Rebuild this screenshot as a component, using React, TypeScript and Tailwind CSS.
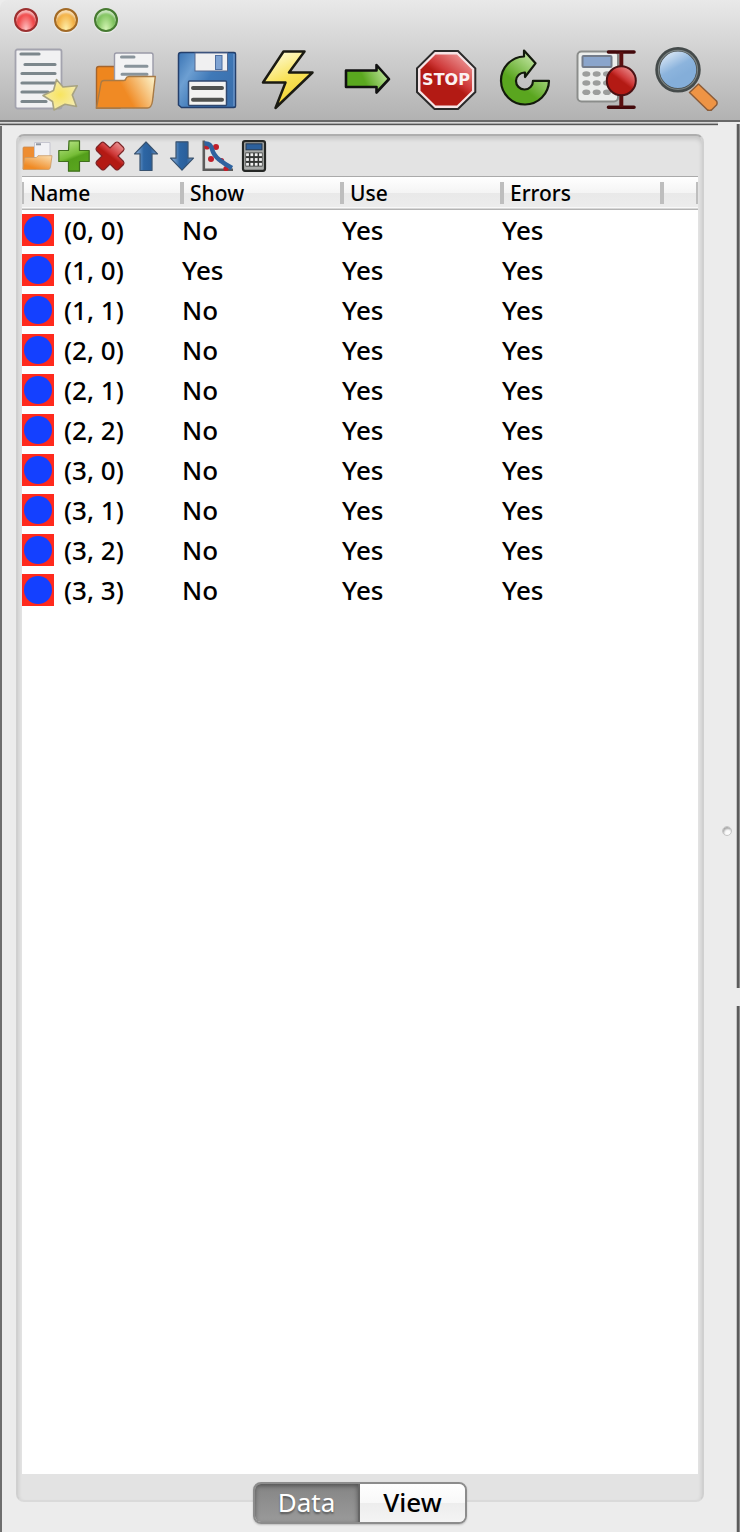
import { useState, type ReactNode } from "react";

type DataSet = { name: string; show: string; use: string; errors: string };

const dataSets: DataSet[] = [
  { name: "(0, 0)", show: "No", use: "Yes", errors: "Yes" },
  { name: "(1, 0)", show: "Yes", use: "Yes", errors: "Yes" },
  { name: "(1, 1)", show: "No", use: "Yes", errors: "Yes" },
  { name: "(2, 0)", show: "No", use: "Yes", errors: "Yes" },
  { name: "(2, 1)", show: "No", use: "Yes", errors: "Yes" },
  { name: "(2, 2)", show: "No", use: "Yes", errors: "Yes" },
  { name: "(3, 0)", show: "No", use: "Yes", errors: "Yes" },
  { name: "(3, 1)", show: "No", use: "Yes", errors: "Yes" },
  { name: "(3, 2)", show: "No", use: "Yes", errors: "Yes" },
  { name: "(3, 3)", show: "No", use: "Yes", errors: "Yes" },
];

function Gradients() {
  return (
    <svg className="absolute size-0" aria-hidden="true">
      <defs>
        <linearGradient id="orange" x1="0" y1="0.5" x2="1" y2="0.2">
          <stop offset="0.45" stopColor="#f08a24" />
          <stop offset="1" stopColor="#fbeec2" />
        </linearGradient>
        <linearGradient id="orangeSmall" x1="0.1" y1="1" x2="0.8" y2="0">
          <stop offset="0.2" stopColor="#f08a24" />
          <stop offset="1" stopColor="#f9d7a4" />
        </linearGradient>
        <linearGradient id="blue" x1="0" y1="0" x2="1" y2="0.6">
          <stop offset="0" stopColor="#3a74b4" />
          <stop offset="0.3" stopColor="#6d9fd2" />
          <stop offset="0.6" stopColor="#3f79b8" />
          <stop offset="1" stopColor="#3b70ad" />
        </linearGradient>
        <linearGradient id="yellow" x1="0.2" y1="0" x2="0.6" y2="1">
          <stop offset="0.1" stopColor="#fdf7c4" />
          <stop offset="0.5" stopColor="#f9e35a" />
          <stop offset="1" stopColor="#f0cf2c" />
        </linearGradient>
        <radialGradient id="star">
          <stop offset="0" stopColor="#f8e45e" />
          <stop offset="1" stopColor="#f5ebaa" />
        </radialGradient>
        <linearGradient id="greenRight" x1="0" y1="0.6" x2="1" y2="0.3">
          <stop offset="0.4" stopColor="#5aa81f" />
          <stop offset="1" stopColor="#c4e8a4" />
        </linearGradient>
        <linearGradient id="greenTurn" x1="0.3" y1="0.8" x2="0.8" y2="0.1">
          <stop offset="0.2" stopColor="#5aa61f" />
          <stop offset="1" stopColor="#cdecb0" />
        </linearGradient>
        <linearGradient id="greenPlus" x1="0.2" y1="0" x2="0.6" y2="1">
          <stop offset="0" stopColor="#b5e283" />
          <stop offset="0.5" stopColor="#76bd37" />
          <stop offset="0.6" stopColor="#549f1b" />
          <stop offset="1" stopColor="#5aa61f" />
        </linearGradient>
        <linearGradient id="red" x1="0.9" y1="0" x2="0.3" y2="0.8">
          <stop offset="0" stopColor="#f0a0a0" />
          <stop offset="0.5" stopColor="#cf3a3a" />
          <stop offset="0.65" stopColor="#b31a14" />
          <stop offset="1" stopColor="#b31a14" />
        </linearGradient>
        <linearGradient id="arrowBlue" x1="0" y1="0" x2="1" y2="0">
          <stop offset="0.1" stopColor="#7ea6d2" />
          <stop offset="0.4" stopColor="#2d66a4" />
          <stop offset="0.7" stopColor="#2a5f9b" />
          <stop offset="1" stopColor="#6f9bcb" />
        </linearGradient>
        <linearGradient id="lens" x1="0.1" y1="0" x2="0.5" y2="0.7">
          <stop offset="0.1" stopColor="#e3edf8" />
          <stop offset="0.7" stopColor="#8cb4dd" />
          <stop offset="1" stopColor="#84aed9" />
        </linearGradient>
      </defs>
    </svg>
  );
}

function NewIcon() {
  return (
    <svg viewBox="0 0 64 64" className="size-16">
      <rect x="1.5" y="2.5" width="46" height="59" rx="2" fill="#f1f1f2" stroke="#a3a3ae" strokeWidth="1.8" />
      <path d="M7 7h18M11 17.5h30M8 26.5h33M8 36h33M8 45h26M8 54.5h24" stroke="#7c878c" strokeWidth="3.2" strokeLinecap="round" />
      <path d="M42.5 32.5 49 40l14.3-1.3-5 9.3 4.2 11.5-11.5-2.2L40 63l-1.5-8.5-9.5-6 10.5-5z" fill="url(#star)" stroke="#a8a380" strokeWidth="1.6" strokeLinejoin="round" />
    </svg>
  );
}

function FolderIcon() {
  return (
    <svg viewBox="0 0 64 64" className="size-16">
      <path d="M2.5 61V22q0-2.5 2.5-2.5H26V61z" fill="#ee861e" stroke="#a5642c" strokeWidth="1.4" />
      <path d="M20.5 50V8q0-2 2-2H57q2 0 2 2v42z" fill="#f3f3f4" stroke="#9a9aa8" strokeWidth="1.4" />
      <path d="M27.5 10h12.5M31.500 19.300h21.500M28 27.300h25" stroke="#89949b" strokeWidth="3" strokeLinecap="round" />
      <path d="M2.500 61 7 36q.5-2.500 3-2.500H30q1.500 0 2-2t3-2H61.300L58.500 54q-1 7-5 7z" fill="url(#orange)" stroke="#a87a45" strokeWidth="1.4" strokeLinejoin="round" />
    </svg>
  );
}

function SmallFolderIcon() {
  return (
    <svg viewBox="0 0 32 32" className="size-8">
      <path d="M1 29V8q0-1 1-1H14V29z" fill="#ee8d31" stroke="#c98a50" strokeWidth="0.8" />
      <path d="M12.500 20V2.500H28V20z" fill="#f2f2f5" stroke="#c6c6d0" strokeWidth="1" />
      <path d="M14 4.300h5" stroke="#9096a0" strokeWidth="2" />
      <path d="M1 29.500 2.500 18.500q0-1 1.500-1h10.500l1.500-1.800H30L28.500 27q-.5 2.500-2 2.500z" fill="url(#orangeSmall)" stroke="#c99a66" strokeWidth="0.8" strokeLinejoin="round" />
    </svg>
  );
}

function SaveIcon() {
  return (
    <svg viewBox="0 0 64 64" className="size-16">
      <path d="M7 5.500H60q1.500 0 1.500 1.500V59q0 1.500-1.500 1.500H7.500L4.500 58V8q0-2.500 2.500-2.500z" fill="url(#blue)" stroke="#243f6b" strokeWidth="1.500" />
      <path d="M60 7v52" stroke="#7ea4d4" strokeWidth="1" />
      <rect x="21" y="6" width="32.500" height="18" fill="#f0f0f1" stroke="#54698f" strokeWidth="1" />
      <rect x="41.500" y="8.500" width="6.500" height="14" fill="#7fa3d3" stroke="#4d6ea0" strokeWidth="1" />
      <rect x="14.500" y="34" width="38" height="24.500" rx="1" fill="#f3f3f2" stroke="#30486f" strokeWidth="1.500" />
      <path d="M19 41h29M19 52.800h29" stroke="#505250" strokeWidth="4" strokeLinecap="round" />
    </svg>
  );
}

function BoltIcon() {
  return (
    <svg viewBox="0 0 64 64" className="size-16">
      <path d="M29.500 4.500H50.500L35 25.500H58.500L21.500 61 31.500 35.500H9z" fill="url(#yellow)" stroke="#1a1a12" strokeWidth="2.500" strokeLinejoin="round" />
    </svg>
  );
}

function NextIcon() {
  return (
    <svg viewBox="0 0 64 64" className="size-16">
      <path d="M12 23.500H42.500V18L55 32 42.500 45.500V40H12z" fill="url(#greenRight)" stroke="#111" strokeWidth="2.600" strokeLinejoin="round" />
    </svg>
  );
}

function StopIcon() {
  return (
    <svg viewBox="0 0 64 64" className="size-16">
      <path d="M20.500 4h23.500L61.300 21.300V45L44 62H20.500L3 45V21.300z" fill="#f6e4e6" stroke="#2a2a2a" strokeWidth="2" />
      <path d="M21.500 7.500h21.500L58 22.500V43.800L43 58.500H21.500L6.500 43.800V22.500z" fill="url(#red)" />
      <text x="32" y="38" textAnchor="middle" fontFamily="DejaVu Sans, sans-serif" fontWeight="700" fontSize="16" fill="#fbf2f2">STOP</text>
    </svg>
  );
}

function RefreshIcon() {
  return (
    <svg viewBox="0 0 64 64" className="size-16">
      <path d="M55 33.800A24 24 0 1 1 30 9.500V3.500L41.500 16.300 31 30V25.500A8.500 8.500 0 1 0 39 33.800z" fill="url(#greenTurn)" stroke="#131a0c" strokeWidth="2.200" strokeLinejoin="round" />
    </svg>
  );
}

function FitIcon() {
  return (
    <svg viewBox="0 0 64 64" className="size-16">
      <rect x="3.500" y="4.500" width="40.500" height="50" rx="4" fill="#eceeec" stroke="#8b8d8b" strokeWidth="2" />
      <rect x="8.500" y="9" width="29" height="11" rx="1" fill="#8aa5cb" stroke="#737c8a" strokeWidth="2" />
      {[27, 36, 45.3].map((y) =>
        [12.3, 22.7, 33].map((x) => <ellipse key={`${x}-${y}`} cx={x} cy={y} rx="4" ry="2.800" fill="#9c9e9c" />),
      )}
      <path d="M34.500 5h25.500M34.500 60.300h25.500" stroke="#43090b" strokeWidth="3.600" strokeLinecap="round" />
      <path d="M47.300 5v55" stroke="#5a0f10" strokeWidth="4" />
      <circle cx="47.300" cy="33.700" r="14.500" fill="url(#red)" stroke="#4c1214" strokeWidth="2" />
    </svg>
  );
}

function SearchIcon() {
  return (
    <svg viewBox="0 0 64 64" className="size-16">
      <path d="M35.500 45.500 53.500 63q2 1.200 4 0l5-5q1.200-2 0-4L44.500 37z" fill="#ee9445" stroke="#8c5c38" strokeWidth="1.500" strokeLinejoin="round" />
      <circle cx="24" cy="22.800" r="20.500" fill="url(#lens)" stroke="#454b4b" strokeWidth="4.500" />
      <circle cx="24" cy="22.800" r="19.500" fill="none" stroke="#7b8383" strokeWidth="1.200" />
    </svg>
  );
}

function AddIcon() {
  return (
    <svg viewBox="0 0 32 32" className="size-8">
      <path d="M11 .8h10.500V10.500H31.200V21.500H21.500V31.200H10.500V21.500H.8V10.500H10.500z" fill="url(#greenPlus)" stroke="#3f6f1c" strokeWidth="1.200" strokeLinejoin="round" />
    </svg>
  );
}

function RemoveIcon() {
  return (
    <svg viewBox="0 0 32 32" className="size-8">
      <path d="M7.500 2.500q1.500-1 3 .5L16 8l5.500-5.500q1.500-1 3 0l5 5q1.200 1.500 0 3L24 16l5.500 5.500q1 1.500 0 3l-5 5q-1.500 1-3 0L16 24l-5.500 5.500q-1.500 1-3 0l-5-5q-1-1.500 0-3L8 16l-5.500-5.500q-1-1.500 0-3z" fill="url(#red)" stroke="#7d2527" strokeWidth="1.200" />
    </svg>
  );
}

function UpIcon() {
  return (
    <svg viewBox="0 0 32 32" className="size-8">
      <path d="M16 2 27.500 13.800H22V30.500H10V13.800H4.500z" fill="url(#arrowBlue)" stroke="#38526f" strokeWidth="1.200" strokeLinejoin="round" />
    </svg>
  );
}

function DownIcon() {
  return (
    <svg viewBox="0 0 32 32" className="size-8">
      <path d="M10 1.800H22V18.200H27.500L16 30.200 4.500 18.200H10z" fill="url(#arrowBlue)" stroke="#38526f" strokeWidth="1.200" strokeLinejoin="round" />
    </svg>
  );
}

function CurveIcon() {
  return (
    <svg viewBox="0 0 32 32" className="size-8">
      <path d="M1.800 .5V29.800H31" fill="none" stroke="#5c5c5c" strokeWidth="2.600" />
      <g fill="#c01f2a">
        <circle cx="5" cy="7" r="2.600" />
        <circle cx="14" cy="7" r="3" />
        <circle cx="9" cy="19" r="3" />
        <circle cx="19.500" cy="20.500" r="2.600" />
        <circle cx="24" cy="28.500" r="2.600" />
      </g>
      <path d="M2.500 3.500Q8.500 3 10 9T17 19.500T30 28" fill="none" stroke="#2f639f" strokeWidth="4.500" />
    </svg>
  );
}

function CalculatorIcon() {
  return (
    <svg viewBox="0 0 32 32" className="size-8">
      <rect x="5" y="1.200" width="22" height="29.600" rx="2" fill="#a9aba9" stroke="#252725" strokeWidth="2.200" />
      <rect x="8" y="3.800" width="16" height="6" fill="#2c609c" stroke="#26384f" strokeWidth="1" />
      <rect x="7.500" y="12.500" width="17" height="14" fill="#343634" />
      {[14.7, 19.5, 24.3].map((y) =>
        [9.5, 13.8, 18.2, 22.5].map((x) => <rect key={`${x}-${y}`} x={x - 1.4} y={y - 1.4} width="2.800" height="2.800" fill="#f1f1f1" />),
      )}
    </svg>
  );
}

function ToolButton({ label, children }: { label: string; children: ReactNode }) {
  return (
    <button type="button" aria-label={label} className="shrink-0">
      {children}
    </button>
  );
}

function TitleBar() {
  return (
    <header className="rounded-tl-lg border-b-2 border-[#686868] bg-linear-to-b from-[#e9e9e9] to-[#b2b2b2] pt-2 pb-[9px]">
      <div className="flex gap-4 pl-3.5">
        <button type="button" aria-label="Close" className="size-6 rounded-full border-2 border-[#9c3030] bg-[radial-gradient(ellipse_at_50%_100%,#ffc9c9_0%,#f24f50_55%,#c92b30_100%)] shadow-[0_1px_1px_#f5f5f5,inset_0_3px_2px_#ffffff99]" />
        <button type="button" aria-label="Minimize" className="size-6 rounded-full border-2 border-[#a26a26] bg-[radial-gradient(ellipse_at_50%_100%,#fff3b0_0%,#f4b54c_55%,#d18a2c_100%)] shadow-[0_1px_1px_#f5f5f5,inset_0_3px_2px_#ffffff99]" />
        <button type="button" aria-label="Zoom" className="size-6 rounded-full border-2 border-[#467a31] bg-[radial-gradient(ellipse_at_50%_100%,#d8f7b8_0%,#86c765_55%,#529a3c_100%)] shadow-[0_1px_1px_#f5f5f5,inset_0_3px_2px_#ffffff99]" />
      </div>
      <div role="toolbar" aria-label="Main" className="mt-[15px] flex gap-4 pl-3.5">
        <ToolButton label="New"><NewIcon /></ToolButton>
        <ToolButton label="Open"><FolderIcon /></ToolButton>
        <ToolButton label="Save"><SaveIcon /></ToolButton>
        <ToolButton label="Calculate"><BoltIcon /></ToolButton>
        <ToolButton label="Next"><NextIcon /></ToolButton>
        <ToolButton label="Stop"><StopIcon /></ToolButton>
        <ToolButton label="Reload"><RefreshIcon /></ToolButton>
        <ToolButton label="Error analysis"><FitIcon /></ToolButton>
        <ToolButton label="Inspect"><SearchIcon /></ToolButton>
      </div>
    </header>
  );
}

function DataTable() {
  return (
    <div className="flex-1 bg-white">
      <table className="w-full table-fixed border-collapse text-left font-medium">
        <colgroup>
          <col className="w-40" />
          <col className="w-40" />
          <col className="w-40" />
          <col className="w-40" />
          <col />
        </colgroup>
        <thead>
          <tr className="h-[34px] bg-[linear-gradient(#aaa_0_1px,#fff_1px,#f4f4f4_50%,#e9e9e9_51%,#ececec_90%,#fff_94%,#b4b4b4_97%)] text-[21px] leading-[22px]">
            {["Name", "Show", "Use", "Errors", ""].map((title) => (
              <th key={title} scope="col" className="p-0 font-medium">
                <div className="h-[22px] border-x-2 border-[#bebebe] pl-1.5">{title}</div>
              </th>
            ))}
          </tr>
        </thead>
        <tbody className="text-[26px] leading-10">
          {dataSets.map((row) => (
            <tr key={row.name} className="h-10">
              <td className="p-0">
                <div className="flex items-center gap-2.5">
                  <span className="flex size-8 items-center justify-center bg-[#ff2a1d]">
                    <span className="size-7 rounded-full bg-[#1440ff]" />
                  </span>
                  {row.name}
                </div>
              </td>
              <td className="p-0">{row.show}</td>
              <td className="p-0">{row.use}</td>
              <td className="p-0">{row.errors}</td>
              <td className="p-0" />
            </tr>
          ))}
        </tbody>
      </table>
    </div>
  );
}

function ViewTabs() {
  const [tab, setTab] = useState("Data");
  const active = "bg-linear-to-b from-[#858585] to-[#9a9a9a] text-white shadow-[inset_0_2px_5px_#00000066] [text-shadow:0_2px_2px_#00000066]";
  const idle = "bg-[linear-gradient(#fff,#f8f8f8_50%,#ededed_51%,#f4f4f4)] font-medium text-black";
  return (
    <div className="relative -mt-5 flex justify-center pb-2 pl-0.5">
      <div role="tablist" className="flex h-[42px] overflow-hidden rounded-lg border-2 border-[#8c8c8c] text-[26px] leading-9 shadow-[0_1px_2px_#00000033]">
        {["Data", "View"].map((name, i) => (
          <button
            key={name}
            type="button"
            role="tab"
            aria-selected={tab === name}
            onClick={() => setTab(name)}
            className={`w-[105px] pb-0.5 ${i === 0 ? "border-r-2 border-[#666]" : ""} ${tab === name ? active : idle}`}
          >
            {name}
          </button>
        ))}
      </div>
    </div>
  );
}

const verticalEdge = "bg-[linear-gradient(to_right,#c4c4c4_0_1px,#5c5c5c_1px_3px,#8d8d8d_3px)]";

export default function App() {
  return (
    <div className="flex min-h-screen flex-col bg-[#ececec] font-['Noto_Sans',sans-serif] text-black">
      <Gradients />
      <TitleBar />
      <div className="flex flex-1">
        <main className="flex min-w-0 flex-1 flex-col">
          <div className="h-1 bg-[linear-gradient(#d6d6d6_0_1px,#a8a8a8_1px_2px,#555_2px_3px,#cfcfcf_3px)]" />
          <div className="flex flex-1 flex-col border-l-2 border-[#6e6e6e] pt-2 pr-3.5 pl-3">
            <section className="ml-0.5 flex flex-1 flex-col rounded-lg border-2 border-[#d0d0d0] border-t-[#aeaeae] border-b-[#dadada] bg-[#e3e3e3] px-1 pb-[26px] shadow-[inset_0_3px_4px_#00000022]">
              <div role="toolbar" aria-label="Data sets" className="flex gap-1 py-1">
                <ToolButton label="Load data"><SmallFolderIcon /></ToolButton>
                <ToolButton label="Add"><AddIcon /></ToolButton>
                <ToolButton label="Remove"><RemoveIcon /></ToolButton>
                <ToolButton label="Move up"><UpIcon /></ToolButton>
                <ToolButton label="Move down"><DownIcon /></ToolButton>
                <ToolButton label="Plot"><CurveIcon /></ToolButton>
                <ToolButton label="Calculator"><CalculatorIcon /></ToolButton>
              </div>
              <DataTable />
            </section>
            <ViewTabs />
          </div>
        </main>
        <div role="separator" aria-orientation="vertical" className="flex w-[18px] items-center justify-center pt-2">
          <span className="size-2.5 rounded-full border border-[#c4c4c4] bg-[#fafafa] shadow-[inset_1px_2px_2px_#00000055]" />
        </div>
        <div className="flex w-1 flex-col gap-[18px] pt-0.5">
          <div className={`flex-[863] ${verticalEdge}`} />
          <div className={`flex-[526] ${verticalEdge}`} />
        </div>
      </div>
    </div>
  );
}
